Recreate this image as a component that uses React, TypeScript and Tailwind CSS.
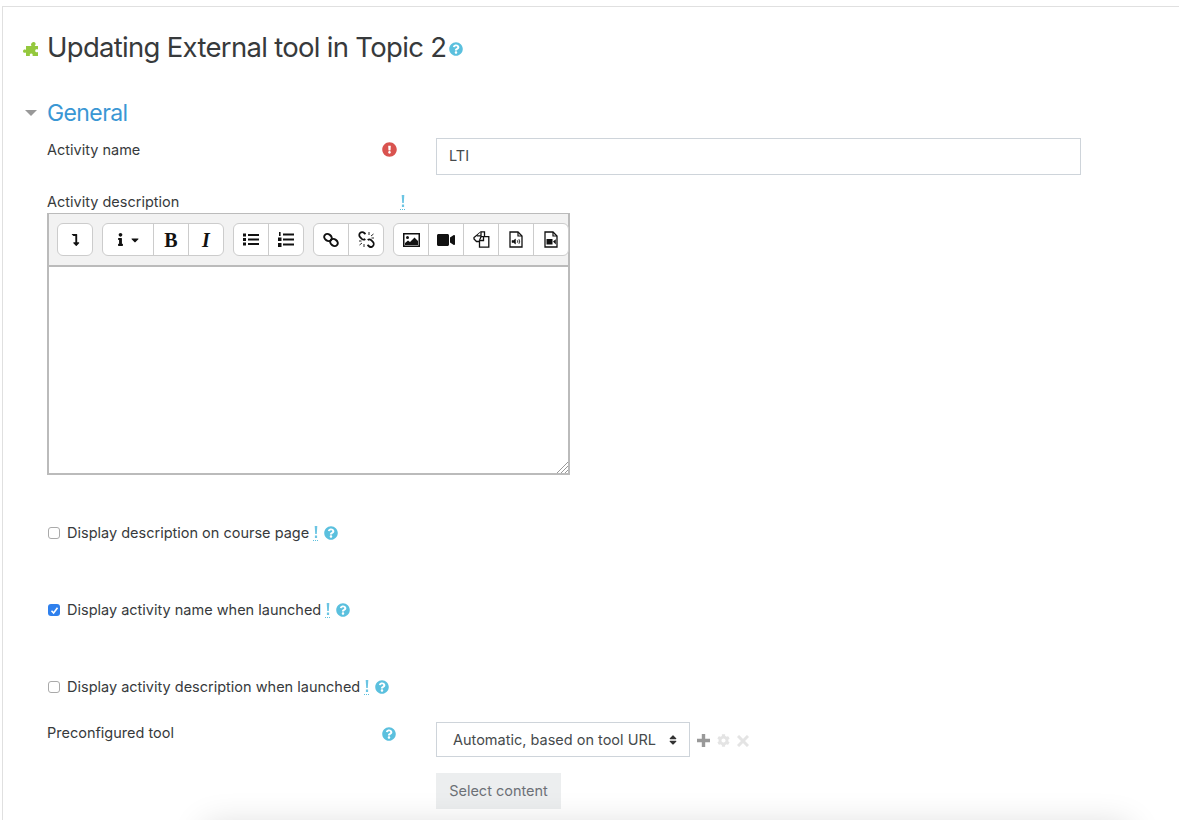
import React from "react";
import {
  FaQuestionCircle, FaExclamationCircle, FaCaretDown, FaCog, FaInfo, FaSort, FaLevelDownAlt, FaVideo,
} from "react-icons/fa";

function Btn({ children, w = "w-[35px] first:w-[34px]" }: { children: React.ReactNode; w?: string }) {
  return (
    <div className={`${w} h-full flex items-center justify-center border-l border-[#ccc] first:border-l-0 text-[#111] text-[15px]`}>
      {children}
    </div>
  );
}

function Group({ children }: { children: React.ReactNode }) {
  return <div className="flex h-[33px] bg-white border border-[#ccc] rounded-[6px]">{children}</div>;
}

function Puzzle() {
  return (
    <svg width="17" height="17" viewBox="0 0 17 17" fill="#94c83d" className="mt-[3px] ml-[-1px] mr-[1px]">
      <path d="M6 6h3.500c-.8-1-.8-3 1.500-4 1.800-.4 3 1 2.500 2.500-.2.600-.5 1-.8 1.500H16v3.500c-1-.6-2.800-.4-2.800 1.200 0 1.600 1.800 1.800 2.800 1.200V16H10.500c.5-1 .3-2.500-1.300-2.500S7.500 15 8 16H4v-3.500C3 13.200 1 13 1 11.200 1 9.500 3 9.200 4 10V6z" />
    </svg>
  );
}

function BulletList() {
  return (
    <svg width="16" height="13" viewBox="0 0 16 13" fill="#111">
      <rect x="0" y="0.500" width="3" height="3" /><rect x="0" y="5" width="3" height="3" /><rect x="0" y="9.500" width="3" height="3" />
      <rect x="5" y="1" width="11" height="2" /><rect x="5" y="5.500" width="11" height="2" /><rect x="5" y="10" width="11" height="2" />
    </svg>
  );
}

function NumberList() {
  return (
    <svg width="16" height="15" viewBox="0 0 16 15" fill="#111">
      <rect x="1" y="0" width="1.600" height="4" /><rect x="0" y="5.500" width="3.500" height="3.500" /><rect x="0" y="11" width="3.500" height="4" />
      <rect x="5" y="1.500" width="11" height="2" /><rect x="5" y="6.500" width="11" height="2" /><rect x="5" y="11.500" width="11" height="2" />
    </svg>
  );
}

function LinkIcon() {
  return (
    <svg width="16" height="16" viewBox="0 0 16 16" fill="none" stroke="#111" strokeWidth="2">
      <ellipse cx="5" cy="5.500" rx="4" ry="3.200" transform="rotate(35 5 5.500)" />
      <ellipse cx="11" cy="10.500" rx="4" ry="3.200" transform="rotate(35 11 10.500)" />
    </svg>
  );
}

function UnlinkIcon() {
  return (
    <svg width="17" height="17" viewBox="0 0 17 17" fill="none" stroke="#111" strokeWidth="1.800">
      <path d="M7.500 3.200 6.300 2a2.900 2.900 0 0 0-4.200 4.100L3.800 7.800c1 .9 2.500 1 3.500.2" />
      <path d="M9.500 13.800l1.200 1.200a2.900 2.900 0 0 0 4.200-4.100L13.200 9.200c-1-.9-2.500-1-3.500-.2" />
      <path d="M11 1v3M15.500 3l-2.500 2M16 7h-2.500M1 10h2.500M1.500 14 4 12M6 16v-3" strokeWidth="0.900" />
    </svg>
  );
}

function ImageIcon() {
  return (
    <svg width="17" height="14" viewBox="0 0 17 14">
      <rect x="0.750" y="0.750" width="15.500" height="12.500" fill="#fff" stroke="#111" strokeWidth="1.500" />
      <circle cx="4.500" cy="4.500" r="1.500" fill="#111" />
      <path d="M2 12V10l3-2.500 2 1.500 4.500-4.500L15 8v4z" fill="#111" />
    </svg>
  );
}

function CopyIcon() {
  return (
    <svg width="17" height="17" viewBox="0 0 17 17" fill="#fff" stroke="#111" strokeWidth="1.300">
      <path d="M8 .8h3.500v4.500L8 9 7 10.500H3.500L1 8V6.500z" />
      <path d="M8 .8v4H4" />
      <path d="M8 5.700h4l3.800 0v10.500H6.500V9.500z" />
      <path d="M10.500 5.700v3.800H6.700" />
    </svg>
  );
}

function FileGlyph({ video }: { video?: boolean }) {
  return (
    <svg width="14" height="17" viewBox="0 0 14 17" fill="none">
      <path d="M1 1h8l4 4v11H1z" fill="#fff" stroke="#111" strokeWidth="1.300" />
      <path d="M9 1v4h4" stroke="#111" strokeWidth="1.200" />
      {video ? (
        <path d="M2.500 8h6v5.500h-6zM9 10.500l2.800-2.300v5.300z" fill="#111" />
      ) : (
        <path d="M3 9.500h1.500l2-1.500v5l-2-1.500H3zM8 9c.7.800.7 2.200 0 3M9.800 8c1.200 1.300 1.200 3.700 0 5" fill="#111" stroke="#111" strokeWidth="0.500" />
      )}
    </svg>
  );
}

function Mark() {
  return (
    <span className="inline-flex flex-col items-center w-[5px] border-b border-dotted border-[#5bc0de] h-[15px] justify-start">
      <svg width="4" height="12" viewBox="0 0 4 12" fill="#6cc5e3"><path d="M.7 0h2.600l-.5 8H1.200zM.9 9.400h2.200V12H.9z" /></svg>
    </span>
  );
}

function Help() {
  return <FaQuestionCircle className="text-[#5bc0de] w-[14px] h-[14px]" />;
}

function Check({ label, checked }: { label: string; checked?: boolean }) {
  return (
    <div className="flex items-center h-[20px]">
      {checked ? (
        <span className="w-[12px] h-[12px] ml-[1px] rounded-[3px] bg-[#2f80ed] flex items-center justify-center">
          <svg width="9" height="9" viewBox="0 0 9 9"><path d="M1.500 4.800 3.600 7 7.500 1.800" stroke="#fff" strokeWidth="1.600" fill="none" /></svg>
        </span>
      ) : (
        <span className="w-[12px] h-[12px] ml-[1px] rounded-[3px] bg-white border border-[#aaa]" />
      )}
      <span className="ml-[7px]">{label}</span>
      <span className="ml-[4px] flex items-center"><Mark /></span>
      <span className="ml-[6px] flex items-center"><Help /></span>
    </div>
  );
}

export default function App() {
  return (
    <div className="relative h-[820px] overflow-hidden bg-white text-[#373a3c] text-[14.5px] font-['Inter','Liberation_Sans',sans-serif]">
      <div className="ml-[2px] mt-[6px] h-[814px] border-l border-t border-[#e0e0e0] pl-[20px]">
        <div className="flex items-center h-[40px] mt-[20px]">
          <Puzzle />
          <h2 className="ml-[7px] text-[27.500px] leading-[40px] tracking-[-0.7px] text-[#373a3c]">Updating External tool in Topic 2</h2>
          <span className="ml-[3px] mt-[3px]"><Help /></span>
        </div>

        <div className="flex items-center h-[32px] mt-[30px]">
          <svg width="12" height="6" viewBox="0 0 12 6" className="ml-[2px] mt-[-1px]"><path d="M0 0h12L6 6z" fill="#999" /></svg>
          <h3 className="ml-[10px] text-[23px] leading-[32px] text-[#3a97d4] tracking-[-0.6px]">General</h3>
        </div>

        <div className="pl-[24px]">
          <div className="flex items-start mt-[9px] h-[37px]">
            <div className="w-[335px] leading-[24px]">Activity name</div>
            <div className="w-[54px] pt-[4px]"><FaExclamationCircle className="text-[#d9534f] w-[15px] h-[15px]" /></div>
            <input readOnly defaultValue="LTI" className="w-[645px] h-[37px] border border-[#ced4da] px-[12px] pb-[2px] text-[#464a4c] outline-none" />
          </div>

          <div className="flex items-center h-[24px] mt-[14px] pt-[2px]">
            <div className="w-[353px]">Activity description</div>
            <Mark />
          </div>

          <div className="w-[523px] h-[262px] border-2 border-[#bbb] border-t flex flex-col relative">
            <div className="h-[53px] bg-[#f2f2f2] border-b-2 border-[#bbb] flex items-center pl-[8px] gap-[9px] shrink-0">
              <Group><Btn><FaLevelDownAlt className="w-[9px] h-[12px]" /></Btn></Group>
              <Group>
                <Btn w="w-[50px]"><span className="flex items-center gap-[4px]"><FaInfo className="w-[9px] h-[13px]" /><FaCaretDown className="w-[12px] h-[12px]" /></span></Btn>
                <Btn><span className="font-['Liberation_Serif',serif] font-bold text-[20px]">B</span></Btn>
                <Btn><span className="font-['Liberation_Serif',serif] italic font-bold text-[20px]">I</span></Btn>
              </Group>
              <Group>
                <Btn><BulletList /></Btn>
                <Btn><NumberList /></Btn>
              </Group>
              <Group>
                <Btn><LinkIcon /></Btn>
                <Btn><UnlinkIcon /></Btn>
              </Group>
              <Group>
                <Btn><ImageIcon /></Btn>
                <Btn><FaVideo className="w-[18px] h-[16px]" /></Btn>
                <Btn><CopyIcon /></Btn>
                <Btn><FileGlyph /></Btn>
                <Btn><FileGlyph video /></Btn>
              </Group>
            </div>
            <div className="flex-1 bg-white relative">
              <svg className="absolute right-0 bottom-0" width="12" height="12" viewBox="0 0 12 12">
                <path d="M1 12 12 1M5 12l7-7M9 12l3-3" stroke="#999" strokeWidth="1" />
              </svg>
            </div>
          </div>

          <div className="flex flex-col gap-[57px] mt-[48px]">
            <Check label="Display description on course page" />
            <Check label="Display activity name when launched" checked />
            <Check label="Display activity description when launched" />
          </div>

          <div className="flex items-start mt-[25px]">
            <div className="w-[335px] leading-[22px]">Preconfigured tool</div>
            <div className="w-[54px] pt-[5px]"><Help /></div>
            <div>
              <div className="flex items-center">
                <div className="w-[254px] h-[35px] border border-[#ced4da] pl-[16px] pr-[11px] flex items-center justify-between text-[#464a4c]">
                  <span>Automatic, based on tool URL</span>
                  <FaSort className="text-[#333] w-[10px] h-[12px]" />
                </div>
                <div className="flex items-center gap-[7px] ml-[7px] mt-[2px]">
                  <svg width="13" height="13" viewBox="0 0 13 13" fill="#999"><path d="M4.800 0h3.400v4.800H13v3.400H8.200V13H4.800V8.200H0V4.800h4.800z" /></svg>
                  <FaCog className="text-[#e4e4e4] w-[13px] h-[13px]" />
                  <svg width="12" height="12" viewBox="0 0 12 12" stroke="#e4e4e4" strokeWidth="3"><path d="M1 1l10 10M11 1 1 11" /></svg>
                </div>
              </div>
              <div className="mt-[16px] w-[125px] h-[36px] bg-[#eceeef] text-[#6c7177] flex items-center justify-center">Select content</div>
            </div>
          </div>
        </div>
      </div>
      <div className="absolute left-[205px] right-[50px] top-[826px] h-[40px] bg-white shadow-[0_0_35px_rgba(0,0,0,0.16)]" />
    </div>
  );
}
